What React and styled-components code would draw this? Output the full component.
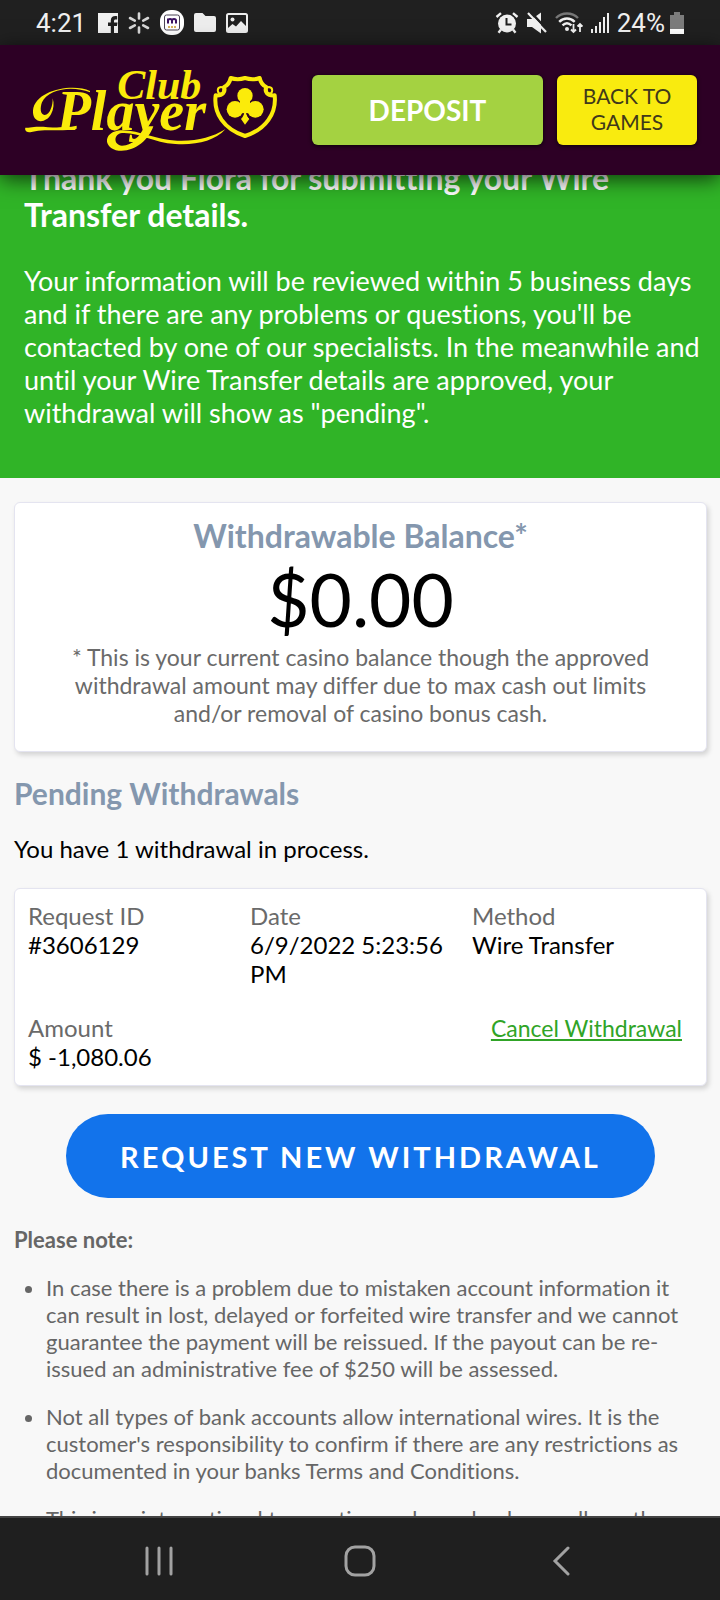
import React from "react";
import styled, { createGlobalStyle } from "styled-components";

const GlobalStyle = createGlobalStyle`
  * {
    box-sizing: border-box;
  }
  body {
    margin: 0;
    background: #f8f8f8;
    font-family: Lato, "Liberation Sans", sans-serif;
    font-variant-ligatures: none;
  }
  h1, h2, p, ul, dl, dd {
    margin: 0;
    padding: 0;
  }
`;

const Screen = styled.div`
  display: flex;
  flex-direction: column;
  height: 100vh;
`;

const StatusBar = styled.div`
  display: flex;
  align-items: center;
  justify-content: space-between;
  flex: none;
  height: 45px;
  padding: 0 36px;
  background: #202020;
  color: #f0f0f0;
  font-family: Roboto, sans-serif;
  font-size: 26px;
  line-height: 30px;
`;

const StatusGroup = styled.div`
  display: flex;
  align-items: center;
  gap: ${(props) => props.$gap}px;
`;

const Clock = styled.span`
  margin-right: 2px;
`;

const Battery = styled.div`
  display: flex;
  align-items: center;
  gap: 5px;
`;

const Header = styled.header`
  display: flex;
  align-items: center;
  flex: none;
  gap: 14px;
  height: 130px;
  padding: 0 23px 0 24px;
  background: #2d0025;
  box-shadow: 0 4px 20px rgba(0, 0, 0, 0.7);
  z-index: 1;
`;

const LogoLink = styled.a`
  flex: none;
  height: 90px;
  margin-right: 14px;
`;

const HeaderButton = styled.button`
  height: 70px;
  border: none;
  border-radius: 6px;
  box-shadow: 0 1px 4px rgba(0, 0, 0, 0.8);
  font-family: inherit;
`;

const DepositButton = styled(HeaderButton)`
  flex: 1;
  background: #a4d241;
  color: white;
  font-size: 28px;
  font-weight: bold;
`;

const GamesButton = styled(HeaderButton)`
  width: 140px;
  padding: 0 20px 2px;
  background: #f9eb0f;
  color: #40391a;
  font-size: 21px;
  line-height: 26px;
`;

const Content = styled.main`
  flex: 1;
  min-height: 0;
  overflow: hidden;
`;

/* starts above the header edge, as the page is scrolled a little */
const Banner = styled.section`
  margin-top: -40px;
  padding: 24px 16px 49px 24px;
  background: #30b427;
  color: white;
`;

const BannerTitle = styled.h1`
  font-size: 32px;
  line-height: 37px;
`;

const BannerText = styled.p`
  margin-top: 31px;
  font-size: 27px;
  line-height: 33px;
`;

const Body = styled.div`
  display: flex;
  flex-direction: column;
  gap: 24px;
  padding: 24px 13px 0 14px;
`;

const Card = styled.section`
  border: 1px solid #e4e4f0;
  border-radius: 6px;
  background: white;
  box-shadow: 2px 3px 5px rgba(0, 0, 0, 0.15);
`;

const BalanceCard = styled(Card)`
  padding: 14px 48px 24px;
  text-align: center;
`;

const BalanceTitle = styled.h2`
  color: #8497ae;
  font-size: 32px;
  line-height: 38px;
`;

const BalanceAmount = styled.p`
  font-size: 73px;
  line-height: 88px;
`;

const BalanceNote = styled.p`
  color: #6a6a6a;
  font-size: 23px;
  line-height: 28px;
`;

const SectionTitle = styled.h2`
  color: #8497ae;
  font-size: 30px;
  line-height: 34px;
`;

const Summary = styled.p`
  font-size: 24px;
  line-height: 30px;
`;

const WithdrawalCard = styled(Card)`
  padding: 12px 12px 14px 13px;
  font-size: 24px;
  line-height: 29px;
`;

const Fields = styled.dl`
  display: grid;
  grid-template-columns: repeat(3, 1fr);
  row-gap: 25px;
`;

const Field = styled.div`
  padding-right: 20px;
`;

const FieldLabel = styled.dt`
  color: #6a6a6a;
`;

const CancelField = styled.div`
  grid-column: 2 / 4;
  padding-right: 12px;
  text-align: right;
`;

const CancelLink = styled.a`
  color: #30a427;
  font-size: 23px;
`;

const RequestButton = styled.button`
  align-self: center;
  width: 85%;
  height: 84px;
  margin: 4px 0;
  border: none;
  border-radius: 42px;
  background: #1273eb;
  color: white;
  font-family: inherit;
  font-size: 29px;
  font-weight: bold;
  letter-spacing: 3px;
`;

const Notes = styled.section`
  color: #666;
  font-size: 22px;
  line-height: 27px;
`;

const NotesTitle = styled.p`
  font-weight: bold;
`;

const NoteList = styled.ul`
  margin-top: 21px;
  padding: 0 0 0 32px;
`;

const Note = styled.li`
  margin-bottom: 21px;
`;

const NavBar = styled.nav`
  display: grid;
  grid-template-columns: repeat(3, 1fr);
  flex: none;
  height: 84px;
  padding: 3px 58px 0;
  border-top: 2px solid #444;
  background: #1f1f1f;
  z-index: 1;
`;

const NavButton = styled.button`
  display: flex;
  align-items: center;
  justify-content: center;
  padding: 0;
  border: none;
  background: none;
  color: #a2a2a2;
`;

const FacebookIcon = () => (
  <svg width="20" height="20" viewBox="0 0 20 20">
    <path
      fill="#f0f0f0"
      d="M0 0h20v20h-4v-7h3l.5-3.400H16V8c0-1 .5-1.600 1.700-1.600h1.500V3.300c-3.700-.7-6.400.6-6.400 4.200v2.100H10V13h2.800v7H0z"
    />
  </svg>
);

const SparkIcon = () => (
  <svg width="22" height="22" viewBox="0 0 22 22" stroke="#d6d6d6" strokeWidth="2.600" strokeLinecap="round">
    <path d="M11 1.500v5M11 15.500v5M2 6l4.800 2.600M15.200 13.400L20 16M2 16l4.800-2.600M15.200 8.600L20 6" />
  </svg>
);

const MessageAppIcon = () => (
  <svg width="24" height="25" viewBox="0 0 24 25">
    <rect width="24" height="25" rx="11" fill="#fff" />
    <rect x="4.500" y="5" width="15" height="15" rx="2" fill="none" stroke="#4b4454" />
    <path d="M8 13.500V8.500M8 10.500c0-2 4-2 4 0v3M12 10.500c0-2 4-2 4 0v3" fill="none" stroke="#3c1361" strokeWidth="2" />
    <path d="M8 17h8" stroke="#d8b45c" strokeWidth="2" strokeDasharray="2 1" />
  </svg>
);

const FolderIcon = () => (
  <svg width="22" height="19" viewBox="0 0 22 19">
    <path fill="#ededed" d="M2 0h6.500l3 3H20a2 2 0 0 1 2 2v12a2 2 0 0 1-2 2H2a2 2 0 0 1-2-2V2a2 2 0 0 1 2-2z" />
  </svg>
);

const PictureIcon = () => (
  <svg width="22" height="20" viewBox="0 0 22 20">
    <rect x="1" y="1" width="20" height="18" rx="1.500" fill="none" stroke="#ededed" strokeWidth="2" />
    <circle cx="6.500" cy="6.500" r="2" fill="#ededed" />
    <path d="M2 15l4.500-4 3.500 2.500L15 8l5 5v5H2z" fill="#ededed" />
  </svg>
);

const AlarmIcon = () => (
  <svg width="24" height="22" viewBox="0 0 24 22">
    <circle cx="12" cy="11.500" r="9" fill="#f0f0f0" />
    <path d="M1.500 5L6 1.200M22.500 5L18 1.200M6 17.500l-2.500 3.300M18 17.500l2.500 3.300" stroke="#f0f0f0" strokeWidth="2.400" />
    <path d="M11.500 6v6.500h5" fill="none" stroke="#202020" strokeWidth="2" />
  </svg>
);

const MuteIcon = () => (
  <svg width="20" height="22" viewBox="0 0 20 22">
    <path d="M0 7h5l9-6.500v21L5 15H0z" fill="#f0f0f0" />
    <path d="M3.500 0L20 17.500" stroke="#202020" strokeWidth="2.500" />
    <path d="M1 1l18 19" stroke="#f0f0f0" strokeWidth="2.200" />
  </svg>
);

const WifiIcon = () => (
  <svg width="28" height="22" viewBox="0 0 28 22" fill="none" strokeWidth="2.400">
    <path d="M1 6c6-6 16-6 22 0" stroke="#777" />
    <path d="M4.200 9.800c4.500-4.400 11-4.400 15.500 0M7.500 13.400c2.700-2.600 6.200-2.600 9 0" stroke="#f0f0f0" />
    <circle cx="12" cy="17" r="2" fill="#f0f0f0" />
    <path d="M18.500 12v8M16 17.500l2.500 2.500 2.500-2.500M25 20v-8M22.500 14.500L25 12l2.500 2.500" stroke="#f0f0f0" strokeWidth="1.800" />
  </svg>
);

const SignalIcon = () => (
  <svg width="18" height="20" viewBox="0 0 18 20" fill="#f0f0f0">
    <path d="M0 16h2v4H0zM4 13h2v7H4zM8 9h2v11H8zM12 4h2v16h-2zM16 0h2v20h-2z" />
  </svg>
);

const BatteryIcon = () => (
  <svg width="14" height="22" viewBox="0 0 14 22">
    <path d="M4 0h6v3h4v14H0V3h4z" fill="#7c7c7c" />
    <path d="M0 17h14v5H0z" fill="#fff" />
  </svg>
);

const Logo = () => (
  <svg width="260" height="90" viewBox="42 30 780 270" aria-label="Club Player">
    <g fill="#fbeb0a" fontFamily="'Liberation Serif', serif" fontWeight="bold" fontStyle="italic">
      <text x="322" y="132" fontSize="126">
        Club
      </text>
      <text x="140" y="226" fontSize="168">
        Player
      </text>
    </g>
    <g fill="#fbeb0a">
      {/* swash in front of the P */}
      <path d="M240 108C190 84 76 104 69 166c-3 40 38 42 54 12 8-15 10-32 5-48 1 20-8 50-24 50-14-1-14-22-8-38 18-40 90-52 144-30z" />
      <path d="M46 218c-4 14 14 16 30 11 30-8 80 2 124-8v-9c-60 12-90 1-128 4-10 0-20 4-26 2z" />
      {/* loop and tail below the y */}
      <path d="M430 214c-14 42-58 78-104 73-46-7-46-52-4-60 56-8 108 28 180 30 60 2 104-10 144-34-32 36-90 48-150 44-70-5-110-36-160-33-26 3-26 36 0 38 32 0 56-26 68-58z" />
    </g>
    {/* shield */}
    <path
      d="M662 69c14 5 28 5 43 0 16 5 30 5 44 0 3 14 8 22 20 27-6 14 2 27 25 25 6 54-26 102-89 122-63-20-95-68-88-122 22 2 30-11 25-25 12-5 17-13 20-27z"
      fill="none"
      stroke="#fbeb0a"
      strokeWidth="12"
      strokeLinejoin="round"
    />
    <path
      d="M634 116c-14 0-14-19-1-20 9 0 10 9 4 12M776 116c14 0 14-19 1-20-9 0-10 9-4 12"
      fill="none"
      stroke="#fbeb0a"
      strokeWidth="6"
    />
    <g fill="#fbeb0a">
      <circle cx="705" cy="122" r="23" />
      <circle cx="675" cy="163" r="25" />
      <circle cx="736" cy="163" r="25" />
      <path d="M690 130h30v45h-30zM705 170l13 22-13 17-12-17z" />
    </g>
    <path d="M690 192c7-4 9-9 10-17M721 192c-7-4-9-9-10-17" fill="none" stroke="#2d0025" strokeWidth="3" />
  </svg>
);

const RecentsIcon = () => (
  <svg width="28" height="30" viewBox="0 0 28 30" stroke="currentColor" strokeWidth="3" strokeLinecap="round">
    <path d="M2 2v26M14 2v26M26 2v26" />
  </svg>
);

const HomeIcon = () => (
  <svg width="32" height="32" viewBox="0 0 32 32" fill="none" stroke="currentColor" strokeWidth="3">
    <rect x="2" y="2" width="28" height="28" rx="9" />
  </svg>
);

const BackIcon = () => (
  <svg width="18" height="30" viewBox="0 0 18 30" fill="none" stroke="currentColor" strokeWidth="3" strokeLinecap="round">
    <path d="M16 2L3 15l13 13" />
  </svg>
);

const withdrawal = [
  { label: "Request ID", value: "#3606129" },
  { label: "Date", value: "6/9/2022 5:23:56 PM" },
  { label: "Method", value: "Wire Transfer" },
  { label: "Amount", value: "$ -1,080.06" },
];

const notes = [
  "In case there is a problem due to mistaken account information it can result in lost, delayed or forfeited wire transfer and we cannot guarantee the payment will be reissued. If the payout can be re-issued an administrative fee of $250 will be assessed.",
  "Not all types of bank accounts allow international wires. It is the customer's responsibility to confirm if there are any restrictions as documented in your banks Terms and Conditions.",
  "This is an international transaction and your bank as well as other",
];

const App = () => {
  return (
    <Screen>
      <GlobalStyle />
      <StatusBar>
        <StatusGroup $gap={10}>
          <Clock>4:21</Clock>
          <FacebookIcon />
          <SparkIcon />
          <MessageAppIcon />
          <FolderIcon />
          <PictureIcon />
        </StatusGroup>
        <StatusGroup $gap={8}>
          <AlarmIcon />
          <MuteIcon />
          <WifiIcon />
          <SignalIcon />
          <Battery>
            <span>24%</span>
            <BatteryIcon />
          </Battery>
        </StatusGroup>
      </StatusBar>
      <Header>
        <LogoLink href="#">
          <Logo />
        </LogoLink>
        <DepositButton>DEPOSIT</DepositButton>
        <GamesButton>BACK TO GAMES</GamesButton>
      </Header>
      <Content>
        <Banner>
          <BannerTitle>Thank you Flora for submitting your Wire Transfer details.</BannerTitle>
          <BannerText>
            Your information will be reviewed within 5 business days and if there are any problems or
            questions, you'll be contacted by one of our specialists. In the meanwhile and until your
            Wire Transfer details are approved, your withdrawal will show as "pending".
          </BannerText>
        </Banner>
        <Body>
          <BalanceCard>
            <BalanceTitle>Withdrawable Balance*</BalanceTitle>
            <BalanceAmount>$0.00</BalanceAmount>
            <BalanceNote>
              * This is your current casino balance though the approved withdrawal amount may differ
              due to max cash out limits and/or removal of casino bonus cash.
            </BalanceNote>
          </BalanceCard>
          <SectionTitle>Pending Withdrawals</SectionTitle>
          <Summary>You have 1 withdrawal in process.</Summary>
          <WithdrawalCard>
            <Fields>
              {withdrawal.map((field) => (
                <Field key={field.label}>
                  <FieldLabel>{field.label}</FieldLabel>
                  <dd>{field.value}</dd>
                </Field>
              ))}
              <CancelField>
                <CancelLink href="#">Cancel Withdrawal</CancelLink>
              </CancelField>
            </Fields>
          </WithdrawalCard>
          <RequestButton>REQUEST NEW WITHDRAWAL</RequestButton>
          <Notes>
            <NotesTitle>Please note:</NotesTitle>
            <NoteList>
              {notes.map((note) => (
                <Note key={note}>{note}</Note>
              ))}
            </NoteList>
          </Notes>
        </Body>
      </Content>
      <NavBar>
        <NavButton aria-label="Recent apps">
          <RecentsIcon />
        </NavButton>
        <NavButton aria-label="Home">
          <HomeIcon />
        </NavButton>
        <NavButton aria-label="Back">
          <BackIcon />
        </NavButton>
      </NavBar>
    </Screen>
  );
};

export default App;
